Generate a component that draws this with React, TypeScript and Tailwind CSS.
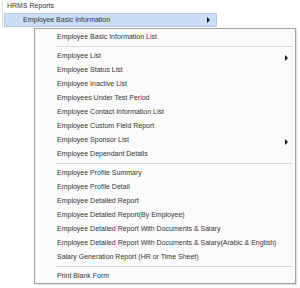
const groups: { label: string; sub?: boolean }[][] = [
  [{ label: "Employee Basic Information List" }],
  [
    { label: "Employee List", sub: true },
    { label: "Employee Status List" },
    { label: "Employee Inactive List" },
    { label: "Employees Under Test Period" },
    { label: "Employee Contact Information List" },
    { label: "Employee Custom Field Report" },
    { label: "Employee Sponsor List", sub: true },
    { label: "Employee Dependant Details" },
  ],
  [
    { label: "Employee Profile Summary" },
    { label: "Employee Profile Detail" },
    { label: "Employee Detailed Report" },
    { label: "Employee Detailed Report(By Employee)" },
    { label: "Employee Detailed Report With Documents & Salary" },
    { label: "Employee Detailed Report With Documents & Salary(Arabic & English)" },
    { label: "Salary Generation Report (HR or Time Sheet)" },
  ],
  [{ label: "Print Blank Form" }],
];

function Arrow() {
  return (
    <span className="block h-0 w-0 border-y-[3px] border-l-[3px] border-y-transparent border-l-[#111]" />
  );
}

function Separator() {
  return (
    <div className="flex h-[5px] flex-col justify-center pl-[20px] pr-[2px]">
      <div className="h-px bg-[#d9d9d9]" />
      <div className="h-px bg-white" />
    </div>
  );
}

export default function App() {
  return (
    <div
      className="relative h-[288px] w-[300px] overflow-hidden bg-white text-[7px] text-[#333]"
      style={{ fontFamily: "'Liberation Sans', Arial, sans-serif" }}
    >
      {/* Parent menu */}
      <div className="ml-[2px] border-l border-[#dcdcdc] pl-px">
        <div className="flex h-[13px] items-center pl-[3px]">HRMS Reports</div>
        <div className="flex h-[14px] w-[213px] items-center justify-between border border-[#aecbee] bg-[#cadff6] pl-[18px] pr-[6px]">
          <span>Employee Basic Information</span>
          <Arrow />
        </div>
        <div className="h-px" />
      </div>

      {/* Submenu */}
      <div className="ml-[34px] w-[262px] border border-[#a3a3a3] bg-[#fbfbfb] pt-px shadow-[1px_1px_1px_rgba(0,0,0,0.12)]">
        {groups.map((g, gi) => (
          <div key={gi}>
            {gi > 0 && <Separator />}
            {g.map((it) => (
              <div key={it.label} className="flex h-[14px] items-center justify-between pl-[22px] pr-[7px]">
                <span className="whitespace-nowrap">{it.label}</span>
                {it.sub && (
                  <span className="translate-y-[2px]">
                    <Arrow />
                  </span>
                )}
              </div>
            ))}
          </div>
        ))}
      </div>
    </div>
  );
}
